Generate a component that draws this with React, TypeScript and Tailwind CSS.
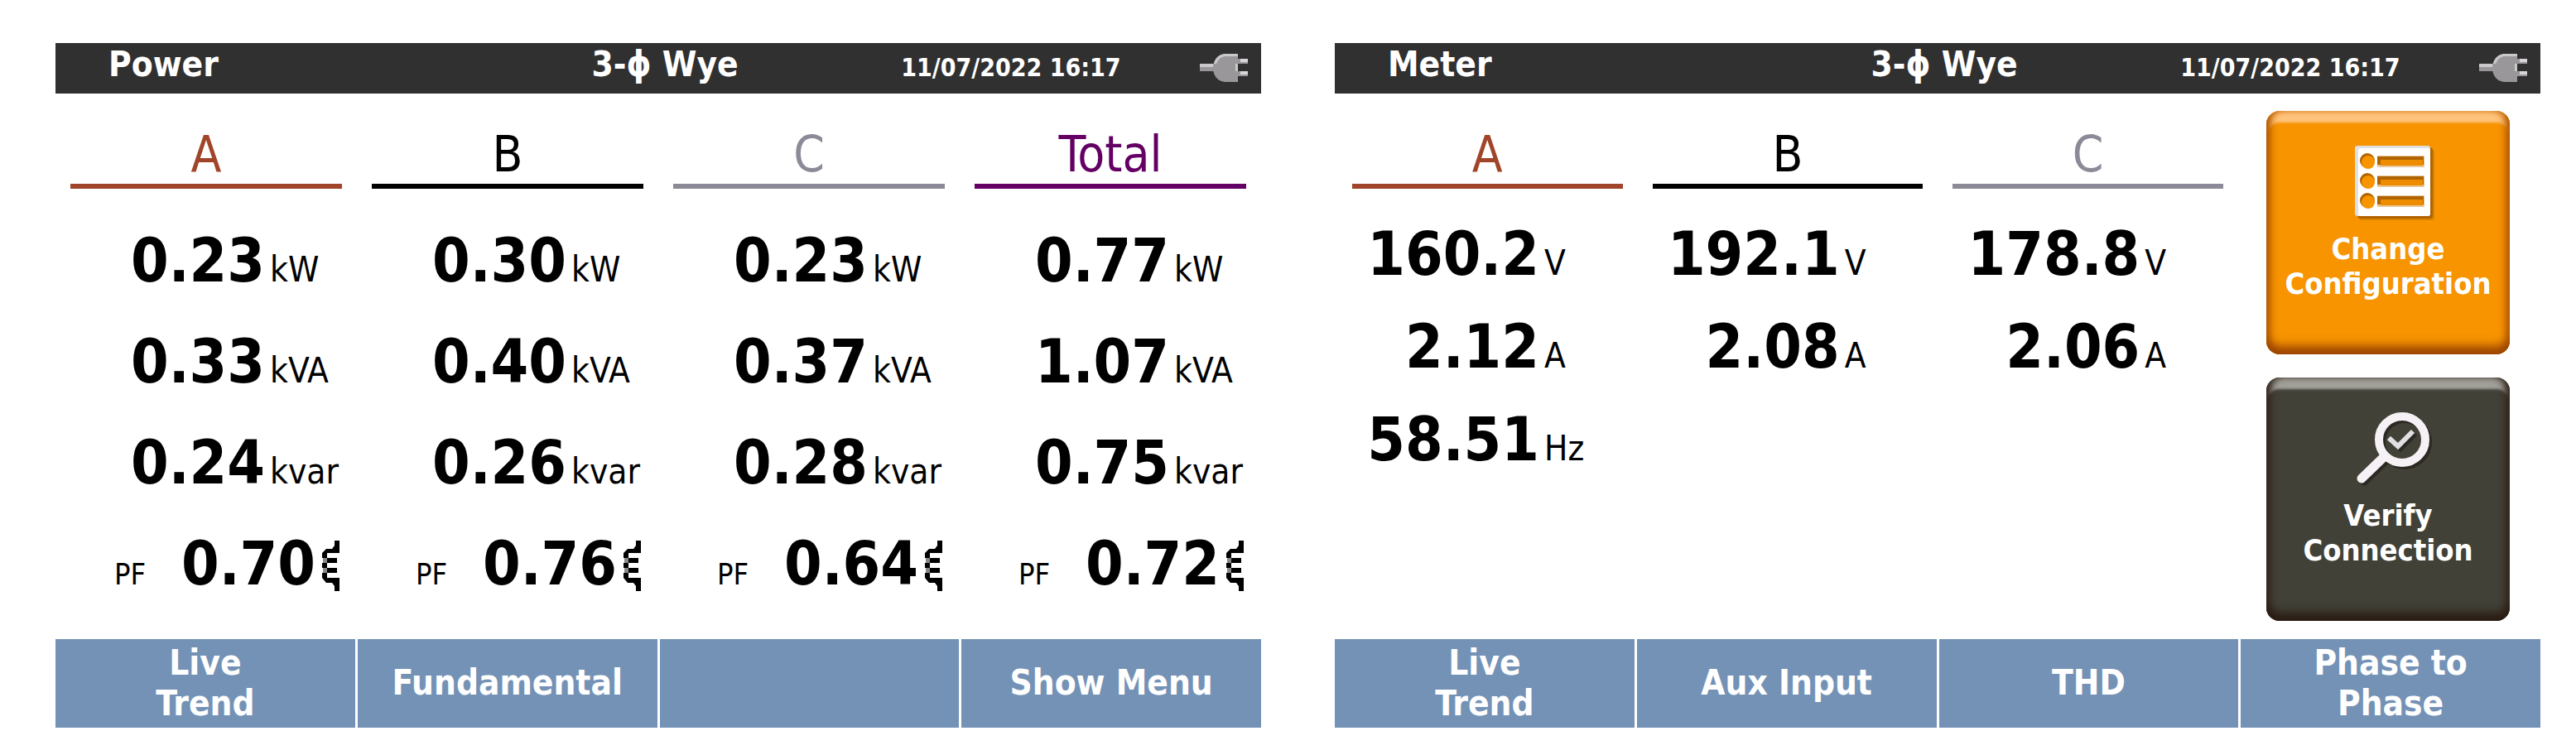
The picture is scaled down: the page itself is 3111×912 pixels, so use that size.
import type { ReactNode } from "react";

interface Reading {
  value: string;
  unit: string;
}

interface Column {
  label: string;
  color: string;
}

const columns: Column[] = [
  { label: "A", color: "border-[#a0452a] text-[#a0452a]" },
  { label: "B", color: "border-black text-black" },
  { label: "C", color: "border-[#8c8a96] text-[#8c8a96]" },
  { label: "Total", color: "border-[#640064] text-[#640064]" },
];

const powerRows: Reading[][] = [
  ["0.23", "0.30", "0.23", "0.77"].map((value) => ({ value, unit: "kW" })),
  ["0.33", "0.40", "0.37", "1.07"].map((value) => ({ value, unit: "kVA" })),
  ["0.24", "0.26", "0.28", "0.75"].map((value) => ({ value, unit: "kvar" })),
];

const powerFactors = ["0.70", "0.76", "0.64", "0.72"];

const meterRows: Reading[][] = [
  ["160.2", "192.1", "178.8"].map((value) => ({ value, unit: "V" })),
  ["2.12", "2.08", "2.06"].map((value) => ({ value, unit: "A" })),
  [{ value: "58.51", unit: "Hz" }],
];

function PlugIcon() {
  return (
    <svg viewBox="0 0 58 34" className="h-[34px] w-[58px]" aria-hidden="true">
      <path d="M0 12h18v9H0z" fill="#9a979b" />
      <path d="M0 12h18v4H0z" fill="#c9c8ca" />
      <path d="M46 6h12v6H46zM46 21h12v6H46z" fill="#9a979b" />
      <path d="M49 6h9v4h-9zM49 21h9v4h-9z" fill="#d6d6d6" />
      <path d="M46 0H30C21 1 16 8 16 17s5 16 14 17h16z" fill="#9a979b" />
      <path d="M46 0H30C23 1 19 5 17 12h3c2-5 5-8 10-9h16z" fill="#c9c8ca" />
      <path d="M43 12h3v9h-3z" fill="#c9c8ca" />
    </svg>
  );
}

// Coil symbol for a lagging power factor
function CoilIcon() {
  return (
    <svg viewBox="0 0 21 61" className="h-[61px] w-[21px]" aria-hidden="true">
      <path d="M15 0h6v15H6v6H0v-6l5-5h7l3-4zM15 61h6V45H6v-6H0v6l5 6h7l3 4z" />
      <path d="M0 27h6v6H0zM6 21h12v6H6zM6 33h12v6H6z" />
      <path d="M1 21h5v6H1zM1 33h5v6H1z" fill="#888" />
    </svg>
  );
}

function ListIcon() {
  return (
    <svg viewBox="0 0 96 92" className="h-[92px] w-24" aria-hidden="true">
      <rect x="5" y="4" width="91" height="86" rx="4" fill="#d88200" />
      <rect x="3" y="2" width="91" height="86" rx="4" fill="#b06400" />
      <rect x="0" y="0" width="91" height="85" rx="3" fill="#e0dfe2" />
      <rect x="4" y="3" width="87" height="82" rx="3" fill="#fff" />
      {[12, 36, 60].map((y) => (
        <g key={y}>
          <circle cx="15" cy={y + 6} r="9" fill="#b06400" />
          <circle cx="16" cy={y + 8} r="8" fill="#f79400" />
          <rect x="27" y={y} width="57" height="14" fill="#e8c79a" />
          <rect x="27" y={y + 1} width="56" height="10" fill="#b06400" />
          <rect x="31" y={y + 5} width="51" height="7" fill="#ee8c00" />
        </g>
      ))}
    </svg>
  );
}

function VerifyIcon() {
  return (
    <svg viewBox="0 0 92 92" className="h-[92px] w-[92px]" aria-hidden="true">
      <g fill="none" stroke="#2c2822" transform="translate(3 3)">
        <circle cx="55" cy="33" r="28" strokeWidth="10" />
        <path d="M34 53 6 80" strokeWidth="11" strokeLinecap="round" />
        <path d="m39 31 11 10 18-18" strokeWidth="6" />
      </g>
      <g fill="none" stroke="#f5f1f5">
        <circle cx="55" cy="33" r="28" strokeWidth="10" />
        <path d="M34 53 6 80" strokeWidth="11" strokeLinecap="round" />
        <path d="m39 31 11 10 18-18" stroke="#e2dfe2" strokeWidth="6" />
      </g>
    </svg>
  );
}

function StatusBar({ title }: { title: string }) {
  return (
    <header className="grid h-[61px] grid-cols-[648fr_374fr_435fr] items-start bg-[#303030] pt-px text-[42px] leading-[49px] font-bold text-white">
      <h2 className="pl-16">{title}</h2>
      <span>3-ϕ Wye</span>
      <div className="flex items-baseline justify-between pt-1 pr-4">
        <time className="text-[30px]">11/07/2022 16:17</time>
        <span className="self-center">
          <PlugIcon />
        </span>
      </div>
    </header>
  );
}

function HeadRow({ items }: { items: Column[] }) {
  return (
    <thead>
      <tr>
        {items.map(({ label, color }) => (
          <th key={label} scope="col" className="px-[18px] pt-[38px] font-normal">
            <div className={`border-b-6 pb-px text-[60px] leading-[70px] ${color}`}>{label}</div>
          </th>
        ))}
      </tr>
    </thead>
  );
}

function SoftKeys({ labels }: { labels: string[] }) {
  return (
    <nav className="grid grid-cols-4 gap-[3px]">
      {labels.map((label, i) => (
        <button
          key={i}
          type="button"
          aria-label={label ? undefined : "Unassigned"}
          className="h-[107px] bg-[#7492b6] pb-0.5 text-[42px] leading-[49px] font-bold whitespace-pre-line text-white"
        >
          {label}
        </button>
      ))}
    </nav>
  );
}

interface ActionButtonProps {
  icon: ReactNode;
  label: string;
  className: string;
}

function ActionButton({ icon, label, className }: ActionButtonProps) {
  return (
    <button
      type="button"
      className={`flex h-[294px] flex-col items-center gap-3 rounded-2xl pt-[42px] text-[36px] leading-[42px] font-bold whitespace-pre-line text-white ${className}`}
    >
      <span className="pl-4">{icon}</span>
      <span>{label}</span>
    </button>
  );
}

function PowerScreen() {
  return (
    <section className="flex min-w-0 flex-1 flex-col">
      <StatusBar title="Power" />
      <table className="mb-[30px] w-full table-fixed">
        <HeadRow items={columns} />
        <tbody className="before:block before:h-[26px]">
          {powerRows.map((row, i) => (
            <tr key={i}>
              {row.map(({ value, unit }, j) => (
                <td key={j} className="px-[18px] py-0">
                  <div className="flex h-[122px] items-baseline gap-1.5 leading-[122px]">
                    <span className="w-[235px] text-right text-[73px] font-bold">{value}</span>
                    <span className="text-[42px]">{unit}</span>
                  </div>
                </td>
              ))}
            </tr>
          ))}
          <tr>
            {powerFactors.map((value, j) => (
              <td key={j} className="px-[18px] py-0">
                <div className="flex h-[122px] items-baseline leading-[122px]">
                  <span className="pl-[53px] text-[36px]">PF</span>
                  <span className="ml-auto text-[73px] font-bold">{value}</span>
                  <span className="mr-[3px] ml-2 self-center pt-1">
                    <CoilIcon />
                  </span>
                </div>
              </td>
            ))}
          </tr>
        </tbody>
      </table>
      <SoftKeys labels={["Live\nTrend", "Fundamental", "", "Show Menu"]} />
    </section>
  );
}

function MeterScreen() {
  return (
    <section className="flex min-w-0 flex-1 flex-col">
      <StatusBar title="Meter" />
      <div className="flex flex-1 items-start gap-[34px] pr-[37px] pb-5 pl-[3px]">
        <div className="min-w-0 flex-1">
          <table className="w-full table-fixed">
            <HeadRow items={columns.slice(0, 3)} />
            <tbody className="before:block before:h-[23px]">
              {meterRows.map((row, i) => (
                <tr key={i}>
                  {row.map(({ value, unit }, j) => (
                    <td key={j} className="px-[18px] py-0">
                      <div className="flex h-28 items-baseline gap-1.5 leading-28">
                        <span className="w-[226px] text-right text-[73px] font-bold">{value}</span>
                        <span className="text-[42px]">{unit}</span>
                      </div>
                    </td>
                  ))}
                </tr>
              ))}
            </tbody>
          </table>
        </div>
        <div className="flex w-[294px] shrink-0 flex-col gap-7 pt-[21px]">
          <ActionButton
            icon={<ListIcon />}
            label={"Change\nConfiguration"}
            className="bg-[#f79400] shadow-[inset_0_-10px_12px_#9a4400,inset_8px_0_8px_-3px_#c86a00,inset_-8px_0_8px_-3px_#c86a00,inset_0_14px_3px_#ffc47c]"
          />
          <ActionButton
            icon={<VerifyIcon />}
            label={"Verify\nConnection"}
            className="bg-[#424138] shadow-[inset_0_-10px_12px_#2a1c12,inset_8px_0_8px_-3px_#382e24,inset_-8px_0_8px_-3px_#382e24,inset_0_14px_3px_#a09f98]"
          />
        </div>
      </div>
      <SoftKeys labels={["Live\nTrend", "Aux Input", "THD", "Phase to\nPhase"]} />
    </section>
  );
}

export default function App() {
  return (
    <main
      className="flex gap-[89px] bg-white pt-[52px] pr-[43px] pb-8 pl-[67px] text-black"
      style={{ fontFamily: '"DejaVu Sans Condensed", "DejaVu Sans", sans-serif' }}
    >
      <PowerScreen />
      <MeterScreen />
    </main>
  );
}
